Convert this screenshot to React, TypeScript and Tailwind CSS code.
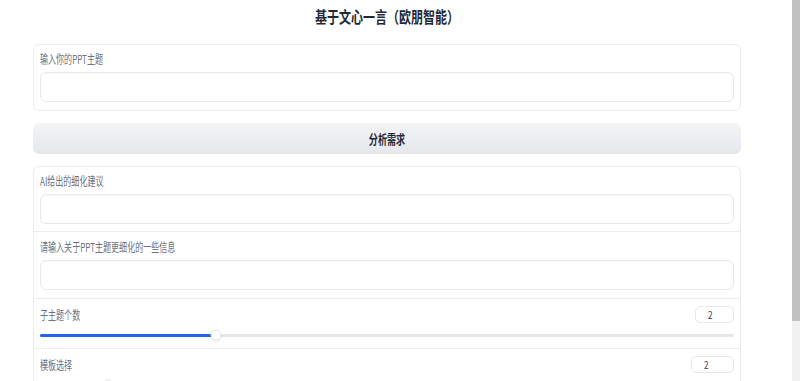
import React from "react";

const cjk = "font-['Noto_Sans_CJK_SC','Noto_Sans',sans-serif]";

function Label({ text }: { text: string }) {
  return (
    <div className="h-4 leading-4 text-[12px] text-[#6b7280] whitespace-nowrap">
      <span className="inline-block origin-left scale-x-[0.67]">{text}</span>
    </div>
  );
}

function TextBox() {
  return (
    <div className="h-[30px] rounded-md border border-[#e8e9ed] bg-white shadow-[inset_0_1px_2px_rgba(0,0,0,0.03)]" />
  );
}

function NumberBox({ value, width }: { value: number; width: string }) {
  return (
    <div
      className={`${width} h-[17px] rounded-[5px] border border-[#e8e9ed] bg-white flex items-center pl-3 text-[11px] text-[#374151] leading-none`}
    >
      <span className="inline-block origin-left scale-x-[0.75]">{value}</span>
    </div>
  );
}

function Slider({ percent }: { percent: number }) {
  return (
    <div className="relative h-3 flex items-center">
      <div className="h-[3px] w-full rounded-full bg-[#e5e7eb]" />
      <div
        className="absolute left-0 h-[3px] rounded-full bg-[#2563eb]"
        style={{ width: `${percent}%` }}
      />
      <div
        className="absolute top-1/2 h-[11px] w-[11px] -translate-x-1/2 -translate-y-1/2 rounded-full border border-[#e5e7eb] bg-white shadow-[0_1px_2px_rgba(0,0,0,0.08)]"
        style={{ left: `${percent}%` }}
      />
    </div>
  );
}

export default function App() {
  return (
    <div className={`flex h-[381px] w-[800px] overflow-hidden bg-white ${cjk}`}>
      <main className="flex-1 pl-[33px] pr-[51px]">
        {/* Title */}
        <h1 className="mt-1 h-6 leading-6 text-center text-[16px] font-bold text-[#1f2937] whitespace-nowrap">
          <span className="inline-block scale-x-[0.75]">基于文心一言（欧朋智能）</span>
        </h1>

        {/* Topic card */}
        <div className="mt-4 rounded-md border border-[#ebecef] bg-white px-[6px] pt-[6px] pb-[8px]">
          <div className="mb-[5px]">
            <Label text="输入你的PPT主题" />
          </div>
          <TextBox />
        </div>

        {/* Analyze button */}
        <button className="mt-3 flex h-[31px] w-full items-center justify-center rounded-md bg-gradient-to-b from-[#f3f4f6] to-[#e6e7eb] text-[13px] font-bold text-[#1f2937]">
          <span className="inline-block scale-x-[0.7]">分析需求</span>
        </button>

        {/* Settings card */}
        <div className="mt-3 rounded-t-md border border-b-0 border-[#ebecef] bg-white divide-y divide-[#ebecef]">
          <div className="px-[6px] pt-[6px] pb-[7px]">
            <div className="mb-[5px]">
              <Label text="AI给出的细化建议" />
            </div>
            <TextBox />
          </div>
          <div className="px-[6px] pt-[7px] pb-[8px]">
            <div className="mb-[5px]">
              <Label text="请输入关于PPT主题更细化的一些信息" />
            </div>
            <TextBox />
          </div>
          <div className="px-[6px] pt-[7px] pb-[7px]">
            <div className="flex items-center justify-between">
              <Label text="子主题个数" />
              <NumberBox value={2} width="w-[39px]" />
            </div>
            <div className="mt-[6px]">
              <Slider percent={25.4} />
            </div>
          </div>
          <div className="px-[6px] pt-[7px] pb-[7px]">
            <div className="flex items-center justify-between">
              <Label text="模板选择" />
              <NumberBox value={2} width="w-[43px]" />
            </div>
            <div className="mt-[6px]">
              <Slider percent={9.8} />
            </div>
          </div>
        </div>
      </main>

      {/* Scrollbar */}
      <div className="flex w-2 flex-col bg-[#f1f1f1]">
        <div className="h-[321px] bg-[#c1c1c1]" />
      </div>
    </div>
  );
}
